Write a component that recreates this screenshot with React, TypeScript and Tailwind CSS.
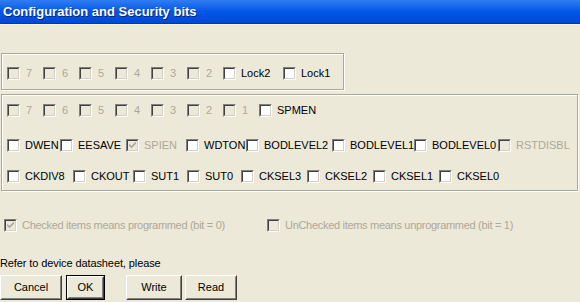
import React from "react";

function Check({ checked = false, disabled = false }: { checked?: boolean; disabled?: boolean }) {
  return (
    <span className="w-[13px] h-[13px] shrink-0 flex border border-t-[#808080] border-l-[#808080] border-b-white border-r-white">
      <span
        className={
          "flex-1 flex items-center justify-center border border-t-[#404040] border-l-[#404040] border-b-[#D4D0C8] border-r-[#D4D0C8] " +
          (disabled ? "bg-[#ECE9D8]" : "bg-white")
        }
      >
        {checked && (
          <svg width="7" height="7" viewBox="0 0 7 7">
            <path d="M0 2.5 L2.5 5 L7 0.5" fill="none" stroke={disabled ? "#ACA899" : "#000"} strokeWidth="1.6" />
          </svg>
        )}
      </span>
    </span>
  );
}

function Item({
  label,
  w,
  disabled = false,
  checked = false,
  gap = "ml-[5px]",
  extra = "",
}: {
  label: string;
  w: string;
  disabled?: boolean;
  checked?: boolean;
  gap?: string;
  extra?: string;
}) {
  return (
    <div className={"flex items-center shrink-0 overflow-hidden whitespace-nowrap h-[13px] " + w}>
      <Check disabled={disabled} checked={checked} />
      <span className={gap + " " + extra + " " + (disabled ? "text-[#ACA899]" : "text-black")}>{label}</span>
    </div>
  );
}

function Btn({ label, w, def = false }: { label: string; w: string; def?: boolean }) {
  const inner = (
    <span className="flex-1 flex border border-t-white border-l-white border-b-[#404040] border-r-[#404040]">
      <span className="flex-1 flex items-center justify-center border border-t-[#ECE9D8] border-l-[#ECE9D8] border-b-[#808080] border-r-[#808080] text-black">
        {label}
      </span>
    </span>
  );
  return (
    <div className={"h-[25px] flex shrink-0 bg-[#ECE9D8] " + w + (def ? " border border-black" : "")}>{inner}</div>
  );
}

export default function App() {
  const bits1 = ["7", "6", "5", "4", "3", "2"];
  const bits2 = ["7", "6", "5", "4", "3", "2", "1"];
  return (
    <div className="w-[580px] h-[302px] bg-[#ECE9D8] overflow-hidden flex flex-col font-['Liberation_Sans',Arial,sans-serif] text-[11px] leading-[13px]">
      <div className="h-[24px] shrink-0 flex items-center pl-[3px] bg-gradient-to-b from-[#2f7cf2] via-[#0057e7] to-[#0048d6] border-b border-[#0a34b8]">
        <span className="text-white font-bold text-[13px] leading-[16px] [text-shadow:1px_1px_0_#0a246a]">
          Configuration and Security bits
        </span>
      </div>
      <div className="h-[1px] shrink-0 bg-[#f6f4ec]" />

      <div className="mt-[28px] ml-[1px] w-[343px] h-[37px] shrink-0 border border-[#ACA899] shadow-[inset_1px_1px_0_#fff,1px_1px_0_#fff] pt-[13px] pl-[5px]">
        <div className="flex">
          {bits1.map((b, i) => (
            <Item key={i} label={b} w="w-[36px]" disabled gap="ml-[6px]" />
          ))}
          <Item label="Lock2" w="w-[60px]" />
          <Item label="Lock1" w="w-[50px]" />
        </div>
      </div>

      <div className="mt-[4px] ml-[1px] w-[577px] h-[97px] shrink-0 border border-[#ACA899] shadow-[inset_1px_1px_0_#fff,1px_1px_0_#fff] pt-[9px] pl-[5px] flex flex-col">
        <div className="flex">
          {bits2.map((b, i) => (
            <Item key={i} label={b} w="w-[36px]" disabled gap="ml-[6px]" />
          ))}
          <Item label="SPMEN" w="w-[60px]" />
        </div>
        <div className="flex mt-[22px]">
          <Item label="DWEN" w="w-[53px]" />
          <Item label="EESAVE" w="w-[66px]" />
          <Item label="SPIEN" w="w-[60px]" disabled checked />
          <Item label="WDTON" w="w-[60px]" />
          <Item label="BODLEVEL2" w="w-[86px]" />
          <Item label="BODLEVEL1" w="w-[82px]" />
          <Item label="BODLEVEL0" w="w-[84px]" />
          <Item label="RSTDISBL" w="w-[75px]" disabled />
        </div>
        <div className="flex mt-[18px]">
          <Item label="CKDIV8" w="w-[66px]" />
          <Item label="CKOUT" w="w-[60px]" />
          <Item label="SUT1" w="w-[54px]" />
          <Item label="SUT0" w="w-[54px]" />
          <Item label="CKSEL3" w="w-[66px]" />
          <Item label="CKSEL2" w="w-[66px]" />
          <Item label="CKSEL1" w="w-[66px]" />
          <Item label="CKSEL0" w="w-[66px]" />
        </div>
      </div>

      <div className="mt-[28px] pl-[4px] flex shrink-0">
        <Item label="Checked items means programmed (bit = 0)" w="w-[263px]" disabled checked extra="tracking-[-0.3px]" />
        <Item label="UnChecked items means unprogrammed (bit = 1)" w="w-[280px]" disabled extra="tracking-[-0.3px]" />
      </div>

      <div className="mt-[25px] h-[13px] shrink-0 text-black whitespace-nowrap tracking-[-0.1px]">Refer to device datasheet, please</div>

      <div className="mt-[5px] flex shrink-0">
        <Btn label="Cancel" w="w-[62px]" />
        <Btn label="OK" w="w-[39px] ml-[4px]" def />
        <Btn label="Write" w="w-[56px] ml-[21px]" />
        <Btn label="Read" w="w-[52px] ml-[3px]" />
      </div>
    </div>
  );
}
